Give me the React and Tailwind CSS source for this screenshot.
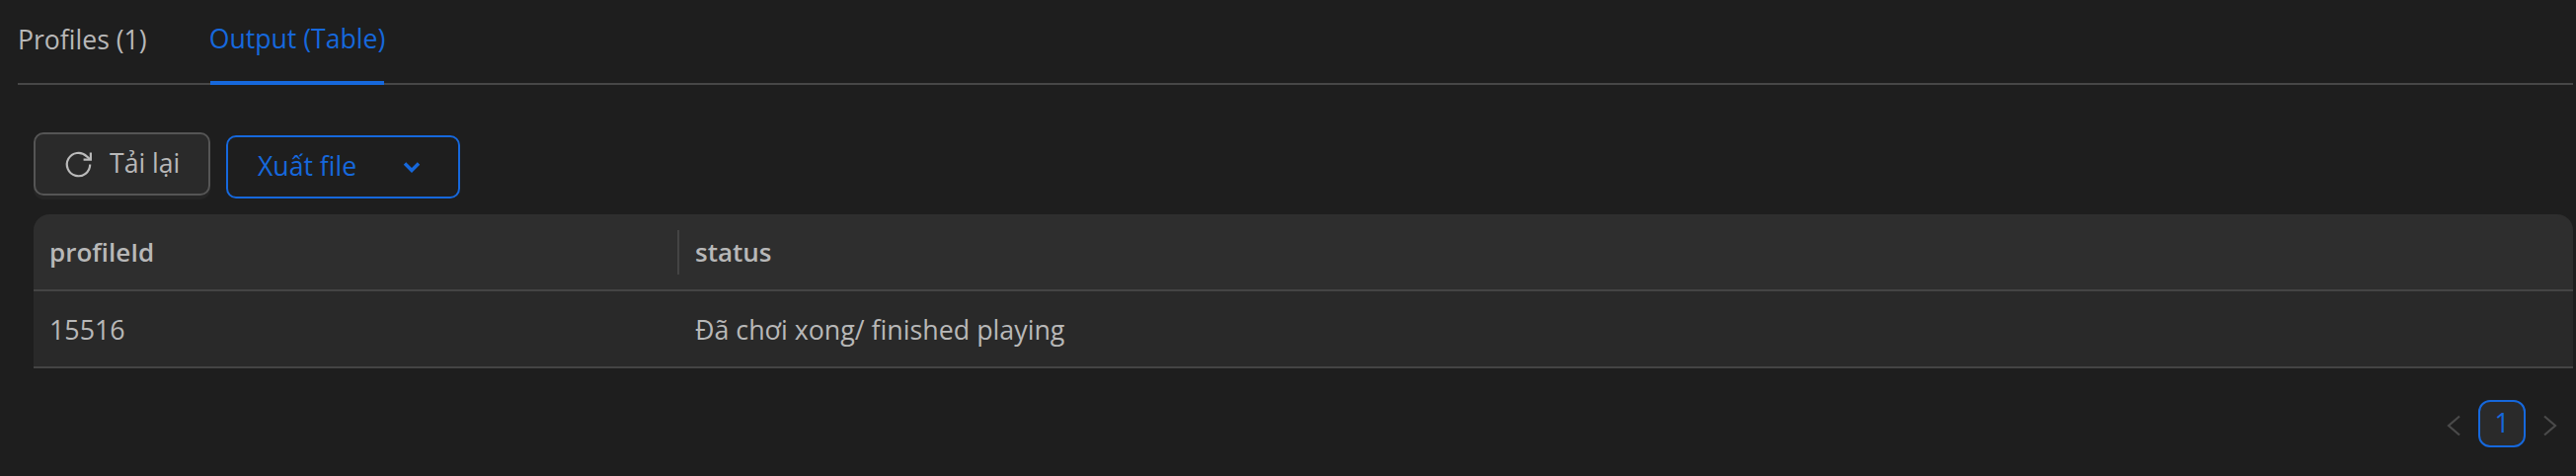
import React from "react";

export default function App() {
  return (
    <div className="h-[482px] w-[2609px] overflow-hidden bg-[#1e1e1e] pl-[18px] pr-[3px] font-['Open_Sans','Noto_Sans',sans-serif] text-[26.6px] text-[#b8b8b8]">
      <div className="flex h-[86px] border-b-2 border-[#474747]">
        <div className="flex h-[84px] w-[195px] items-center pb-[2px]">Profiles (1)</div>
        <div className="flex h-[86px] w-[176px] items-center justify-center whitespace-nowrap border-b-[4px] border-[#1668dc] pb-[2px] text-[#1668dc]">Output (Table)</div>
      </div>
      <div className="pl-[16px]">
        <div className="mt-[48px] flex items-start gap-[16px]">
          <button className="flex h-[64px] w-[179px] items-center rounded-[10px] border-2 border-[#555] bg-[#2a2a2a] pl-[27px] shadow-[0_4px_0_rgba(255,255,255,0.03)]">
            <svg width="33" height="33" viewBox="0 0 24 24" fill="none" stroke="#bababa" strokeWidth="1.6">
              <path d="M20.5 12a8.5 8.5 0 1 1-2.6-6.1L20.5 8.2" />
              <path d="M21 3.2v5.3h-5.3" fill="none" />
            </svg>
            <span className="ml-[15px]">Tải lại</span>
          </button>
          <button className="mt-[3px] flex h-[64px] w-[237px] items-center rounded-[10px] border-2 border-[#1668dc] pl-[30px] text-[#1668dc]">
            <span>Xuất file</span>
            <svg className="ml-[47px]" width="18" height="14" viewBox="0 0 18 14" fill="none" stroke="#1668dc" strokeWidth="3.5">
              <path d="M2 3.5l7 7 7-7" />
            </svg>
          </button>
        </div>
        <div className="mt-[16px]">
          <div className="grid h-[78px] grid-cols-[652px_1fr] rounded-t-[16px] border-b-2 border-[#444] bg-[#2e2e2e] text-[26px] font-semibold text-[#b8b8b8]">
            <div className="flex items-center pl-[16px]">profileId</div>
            <div className="flex items-center">
              <div className="h-[45px] w-[2px] bg-[#444]" />
              <span className="ml-[16px]">status</span>
            </div>
          </div>
          <div className="grid h-[78px] grid-cols-[652px_1fr] border-b-2 border-[#444] bg-[#292929] pt-[2px] text-[26.8px]">
            <div className="flex items-center pl-[16px]">15516</div>
            <div className="flex items-center pl-[18px]">Đã chơi xong/ finished playing</div>
          </div>
        </div>
        <div className="mt-[32px] flex items-center justify-end pr-[16px]">
          <svg className="mt-[3px]" width="14" height="22" viewBox="0 0 14 22" fill="none" stroke="#4a4a4a" strokeWidth="2.2">
            <path d="M13 1.5L2 11l11 9.5" />
          </svg>
          <div className="ml-[18px] flex h-[48px] w-[48px] items-center justify-center rounded-[12px] border-2 border-[#1668dc] bg-[#2a2a2a] text-[#1668dc]">1</div>
          <svg className="ml-[18px] mt-[3px]" width="14" height="22" viewBox="0 0 14 22" fill="none" stroke="#4a4a4a" strokeWidth="2.2">
            <path d="M1 1.5L12 11 1 20.5" />
          </svg>
        </div>
      </div>
    </div>
  );
}
